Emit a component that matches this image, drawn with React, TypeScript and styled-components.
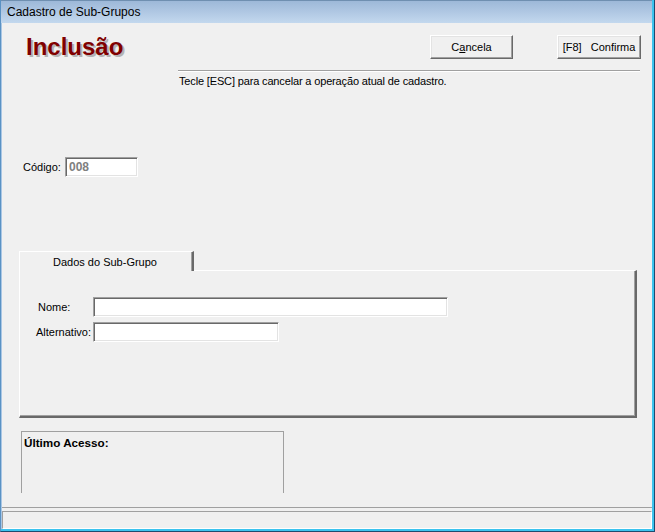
import styled, { createGlobalStyle } from "styled-components";

const GlobalStyle = createGlobalStyle`
  html, body {
    margin: 0;
    padding: 0;
    background: #f0f0f0;
  }
  body {
    font-family: "Liberation Sans", Arial, sans-serif;
    font-size: 11px;
    color: #000000;
  }
`;

const Frame = styled.div`
  width: 655px;
  height: 532px;
  box-sizing: border-box;
  display: flex;
  flex-direction: column;
  border-right: 1px solid #1d4a6e;
  border-bottom: 1px solid #1d4a6e;
  border-left: 1px solid #5a92c4;
  background: #3cc3ee;
`;

const TitleBar = styled.div`
  height: 23px;
  box-sizing: border-box;
  flex-shrink: 0;
  display: flex;
  align-items: center;
  padding-left: 6px;
  border-top: 1px solid #6f8fb0;
  background: linear-gradient(#9db8d8, #c3d8ee);
  font-size: 12px;
  margin-right: 2px;
`;

const Client = styled.div`
  flex: 1;
  display: flex;
  flex-direction: column;
  margin-right: 2px;
  margin-bottom: 2px;
  border-left: 1px solid #a9c6e4;
  background: #f0f0f0;
  min-height: 0;
`;

const Header = styled.div`
  display: flex;
  align-items: flex-start;
  margin-top: 12px;
  padding: 0 11px 0 24px;
`;

const Heading = styled.h1`
  margin: 0;
  flex: 1;
  font-family: "Liberation Sans", Arial, sans-serif;
  font-size: 24px;
  line-height: 24px;
  font-weight: bold;
  color: #800000;
  text-shadow: 2px 2px 0 #b4b4b4;
`;

const Button = styled.button<{ $width: number }>`
  width: ${({ $width }) => $width}px;
  height: 24px;
  margin-left: ${({ $width }) => ($width > 83 ? 44 : 0)}px;
  padding: 0;
  background: #f0f0f0;
  border: 1px solid;
  border-color: #ffffff #696969 #696969 #ffffff;
  box-shadow: inset -1px -1px 0 #a0a0a0, inset 1px 1px 0 #e3e3e3;
  font-family: "Liberation Sans", Arial, sans-serif;
  font-size: 11px;
  color: #000000;
  white-space: pre;
`;

const Separator = styled.div`
  margin: 11px 12px 0 176px;
  height: 1px;
  background: #a0a0a0;
  border-bottom: 1px solid #ffffff;
`;

const Hint = styled.div`
  margin: 3px 0 0 177px;
  line-height: 13px;
  letter-spacing: -0.15px;
`;

const FieldRow = styled.div<{ $top: number; $left: number }>`
  display: flex;
  align-items: center;
  margin-top: ${({ $top }) => $top}px;
  margin-left: ${({ $left }) => $left}px;
`;

const Label = styled.span<{ $width: number; $indent?: number }>`
  width: ${({ $width }) => $width}px;
  padding-left: ${({ $indent = 0 }) => $indent}px;
  box-sizing: border-box;
  flex-shrink: 0;
`;

const Input = styled.div<{ $width: number; $muted?: boolean }>`
  width: ${({ $width }) => $width}px;
  height: 20px;
  box-sizing: border-box;
  display: flex;
  align-items: center;
  padding-left: 3px;
  background: #ffffff;
  border: 1px solid;
  border-color: #a0a0a0 #ffffff #ffffff #a0a0a0;
  box-shadow: inset 1px 1px 0 #696969, inset -1px -1px 0 #e3e3e3;
  color: ${({ $muted }) => ($muted ? "#808080" : "#000000")};
  font-weight: ${({ $muted }) => ($muted ? "bold" : "normal")};
  font-size: 12px;
`;

const Tabs = styled.div`
  margin: 74px 15px 0 17px;
  display: flex;
  flex-direction: column;
`;

const TabStrip = styled.div`
  display: flex;
  align-items: flex-end;
  height: 19px;
`;

const Tab = styled.div`
  width: 175px;
  height: 20px;
  box-sizing: border-box;
  margin-bottom: -1px;
  display: flex;
  align-items: center;
  justify-content: center;
  padding-right: 2px;
  background: #f0f0f0;
  border-top: 1px solid #ffffff;
  border-left: 1px solid #ffffff;
  border-right: 2px solid;
  border-right-color: #696969;
  box-shadow: inset -1px 0 0 #a0a0a0;
  position: relative;
  z-index: 1;
`;

const Panel = styled.div`
  height: 148px;
  box-sizing: border-box;
  padding-top: 26px;
  border-top: 1px solid #ffffff;
  border-left: 1px solid #ffffff;
  border-right: 2px solid #696969;
  border-bottom: 2px solid #696969;
  box-shadow: inset -1px -1px 0 #a0a0a0;
`;

const GroupBox = styled.div`
  margin: 13px 0 0 19px;
  width: 263px;
  height: 62px;
  box-sizing: border-box;
  padding: 4px 0 0 2px;
  border: 1px solid #a0a0a0;
  border-bottom: none;
  font-weight: bold;
  font-size: 11.7px;
  line-height: 13px;
`;

const StatusBar = styled.div`
  margin-top: auto;
  border-top: 1px solid #a0a0a0;
  padding: 3px 0 0 0;
`;

const StatusPanel = styled.div`
  height: 18px;
  box-sizing: border-box;
  margin-left: 0;
  border: 1px solid;
  border-color: #a0a0a0 #ffffff #ffffff #a0a0a0;
`;

export default function App() {
  return (
    <>
      <GlobalStyle />
      <Frame>
        <TitleBar>Cadastro de Sub-Grupos</TitleBar>
        <Client>
          <Header>
            <Heading>Inclusão</Heading>
            <Button $width={83}>
              C<u>a</u>ncela
            </Button>
            <Button $width={84}>{"[F8]   Confirma"}</Button>
          </Header>
          <Separator />
          <Hint>Tecle [ESC] para cancelar a operação atual de cadastro.</Hint>
          <FieldRow $top={69} $left={21}>
            <Label $width={42}>Código:</Label>
            <Input $width={73} $muted>
              008
            </Input>
          </FieldRow>
          <Tabs>
            <TabStrip>
              <Tab>Dados do Sub-Grupo</Tab>
            </TabStrip>
            <Panel>
              <FieldRow $top={0} $left={16}>
                <Label $width={57} $indent={2}>
                  Nome:
                </Label>
                <Input $width={355} />
              </FieldRow>
              <FieldRow $top={5} $left={16}>
                <Label $width={57}>Alternativo:</Label>
                <Input $width={186} />
              </FieldRow>
            </Panel>
          </Tabs>
          <GroupBox>Último Acesso:</GroupBox>
          <StatusBar>
            <StatusPanel />
          </StatusBar>
        </Client>
      </Frame>
    </>
  );
}
